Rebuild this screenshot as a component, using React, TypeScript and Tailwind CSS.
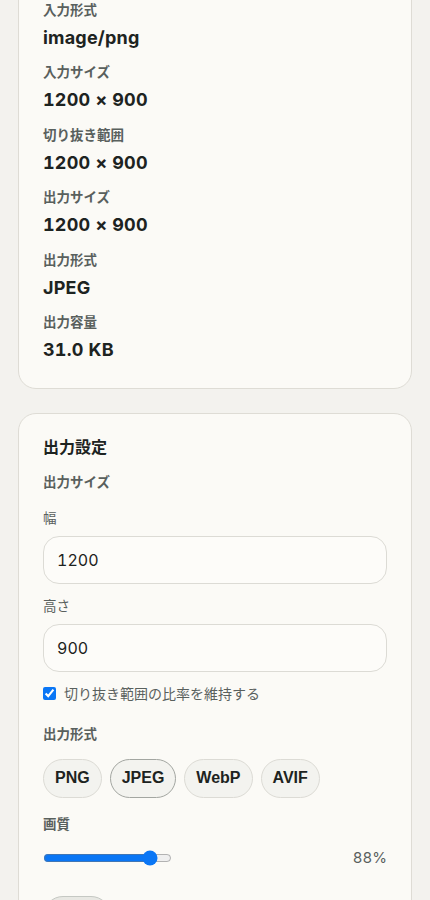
import React, { useState } from 'react'

const FONT = '[font-family:Inter,"Noto_Sans_CJK_JP",sans-serif]'

const SUMMARY: { label: string; value: string }[] = [
  { label: '入力形式', value: 'image/png' },
  { label: '入力サイズ', value: '1200 × 900' },
  { label: '切り抜き範囲', value: '1200 × 900' },
  { label: '出力サイズ', value: '1200 × 900' },
  { label: '出力形式', value: 'JPEG' },
  { label: '出力容量', value: '31.0 KB' },
]

const FORMATS = ['PNG', 'JPEG', 'WebP', 'AVIF']

function Card({ children, className = '' }: { children: React.ReactNode; className?: string }) {
  return (
    <section className={`rounded-[18px] border border-[#dedcd5] bg-[#fbfaf6] px-6 ${className}`}>
      {children}
    </section>
  )
}

export default function App() {
  const [width, setWidth] = useState('1200')
  const [height, setHeight] = useState('900')
  const [keepRatio, setKeepRatio] = useState(true)
  const [format, setFormat] = useState('JPEG')
  const [quality, setQuality] = useState(88)

  return (
    <div className={`min-h-screen overflow-hidden bg-[#f3f2ee] px-[18px] text-[#1d2321] tabular-nums ${FONT}`}>
      <Card className="-mt-[25px] pt-6 pb-6">
        <div className="flex flex-col gap-[10.4px]">
          {SUMMARY.map((item) => (
            <div key={item.label} className="flex flex-col">
              <span className="text-[13.5px] leading-5 font-semibold text-[#59605d]">{item.label}</span>
              <span className="mt-1 text-[18px] leading-7 font-bold tracking-[0.2px]">{item.value}</span>
            </div>
          ))}
        </div>
      </Card>

      <Card className="mt-6 pt-6 pb-6">
        <h2 className="text-[16px] leading-[18px] font-bold">出力設定</h2>
        <div className="mt-4 text-[13.5px] leading-5 font-semibold text-[#59605d]">出力サイズ</div>

        <label className="mt-4 block text-[13.5px] leading-5 text-[#59605d]">幅</label>
        <input
          value={width}
          onChange={(e) => setWidth(e.target.value)}
          className="mt-2 block h-12 w-full rounded-2xl border border-[#dcdbd5] bg-[#fdfcf9] px-[13px] text-base text-[#1d2321] outline-none"
        />

        <label className="mt-3 block text-[13.5px] leading-5 text-[#59605d]">高さ</label>
        <input
          value={height}
          onChange={(e) => setHeight(e.target.value)}
          className="mt-2 block h-12 w-full rounded-2xl border border-[#dcdbd5] bg-[#fdfcf9] px-[13px] text-base text-[#1d2321] outline-none"
        />

        <label className="mt-3 flex h-5 items-center gap-2 text-[14px] text-[#59605d]">
          <input
            type="checkbox"
            checked={keepRatio}
            onChange={(e) => setKeepRatio(e.target.checked)}
            className="m-0 h-[13px] w-[13px] accent-[#0a76f5]"
          />
          切り抜き範囲の比率を維持する
        </label>

        <div className="mt-5 text-[13.5px] leading-5 font-semibold text-[#59605d]">出力形式</div>
        <div className="mt-[15px] flex gap-2">
          {FORMATS.map((f) => (
            <button
              key={f}
              onClick={() => setFormat(f)}
              className={`h-[39px] rounded-full border bg-[#f3f3ef] px-[11px] text-[16px] font-bold text-[#1d2321] [font-family:"Liberation_Sans",Arial,sans-serif] ${
                f === format ? 'border-[#a3a6a1]' : 'border-[#dcdbd5]'
              }`}
            >
              {f}
            </button>
          ))}
        </div>

        <div className="mt-4 text-[13.5px] leading-5 font-semibold text-[#59605d]">画質</div>
        <div className="mt-[14px] flex h-5 items-center justify-between">
          <input
            type="range"
            min={1}
            max={100}
            value={quality}
            onChange={(e) => setQuality(Number(e.target.value))}
            className="m-0 w-[129px] accent-[#0a76f5]"
          />
          <span className="text-[15px] text-[#59605d]">{quality}%</span>
        </div>

        <button className="mt-7 h-10 rounded-full border border-[#c5c8c3] bg-[#e8e8e3] px-3 text-[14px] leading-none font-bold">
          初期化
        </button>
      </Card>
    </div>
  )
}
